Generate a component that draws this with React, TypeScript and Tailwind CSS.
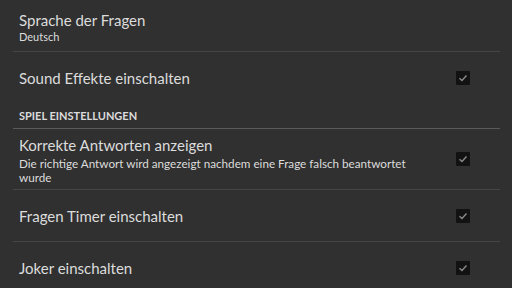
import React from "react";

function Check() {
  return (
    <div className="w-[14px] h-[14px] bg-[#121212] rounded-[1px] flex items-center justify-center shrink-0">
      <svg width="10" height="10" viewBox="0 0 10 10">
        <path d="M1.5 5.2 L4 7.5 L8.5 2.5" fill="none" stroke="#8a8a8a" strokeWidth="1.4" />
      </svg>
    </div>
  );
}

function Divider({ light = false }: { light?: boolean }) {
  return <div className={`ml-[13px] mr-[12px] h-px ${light ? "bg-[#5a5a5a]" : "bg-[#464646]"}`} />;
}

export default function App() {
  return (
    <div
      className="w-[512px] h-[288px] overflow-hidden bg-[#303030] text-[#dcdcdc]"
      style={{ fontFamily: "Lato, 'Noto Sans', sans-serif" }}
    >
      <div className="h-[51px] pl-[19px] pt-[10px]">
        <div className="text-[15px] leading-[20px]">Sprache der Fragen</div>
        <div className="text-[11px] leading-[14px] mt-0">Deutsch</div>
      </div>
      <Divider />
      <div className="h-[51px] pl-[19px] pr-[42px] flex items-center justify-between">
        <div className="text-[15px] leading-[20px]">Sound Effekte einschalten</div>
        <Check />
      </div>
      <div className="h-[25px] pl-[19px] pt-[1px] flex items-center">
        <div className="text-[11px] font-bold">SPIEL EINSTELLUNGEN</div>
      </div>
      <Divider light />
      <div className="h-[60px] pl-[19px] pr-[42px] flex items-center justify-between">
        <div>
          <div className="text-[15px] leading-[20px]">Korrekte Antworten anzeigen</div>
          <div className="text-[11.7px] leading-[14px] mt-[1px] w-[400px]">
            Die richtige Antwort wird angezeigt nachdem eine Frage falsch beantwortet wurde
          </div>
        </div>
        <Check />
      </div>
      <Divider />
      <div className="h-[51px] pl-[19px] pr-[42px] flex items-center justify-between">
        <div className="text-[15px] leading-[20px]">Fragen Timer einschalten</div>
        <Check />
      </div>
      <Divider />
      <div className="h-[51px] pl-[19px] pr-[42px] flex items-center justify-between">
        <div className="text-[15px] leading-[20px]">Joker einschalten</div>
        <Check />
      </div>
    </div>
  );
}
